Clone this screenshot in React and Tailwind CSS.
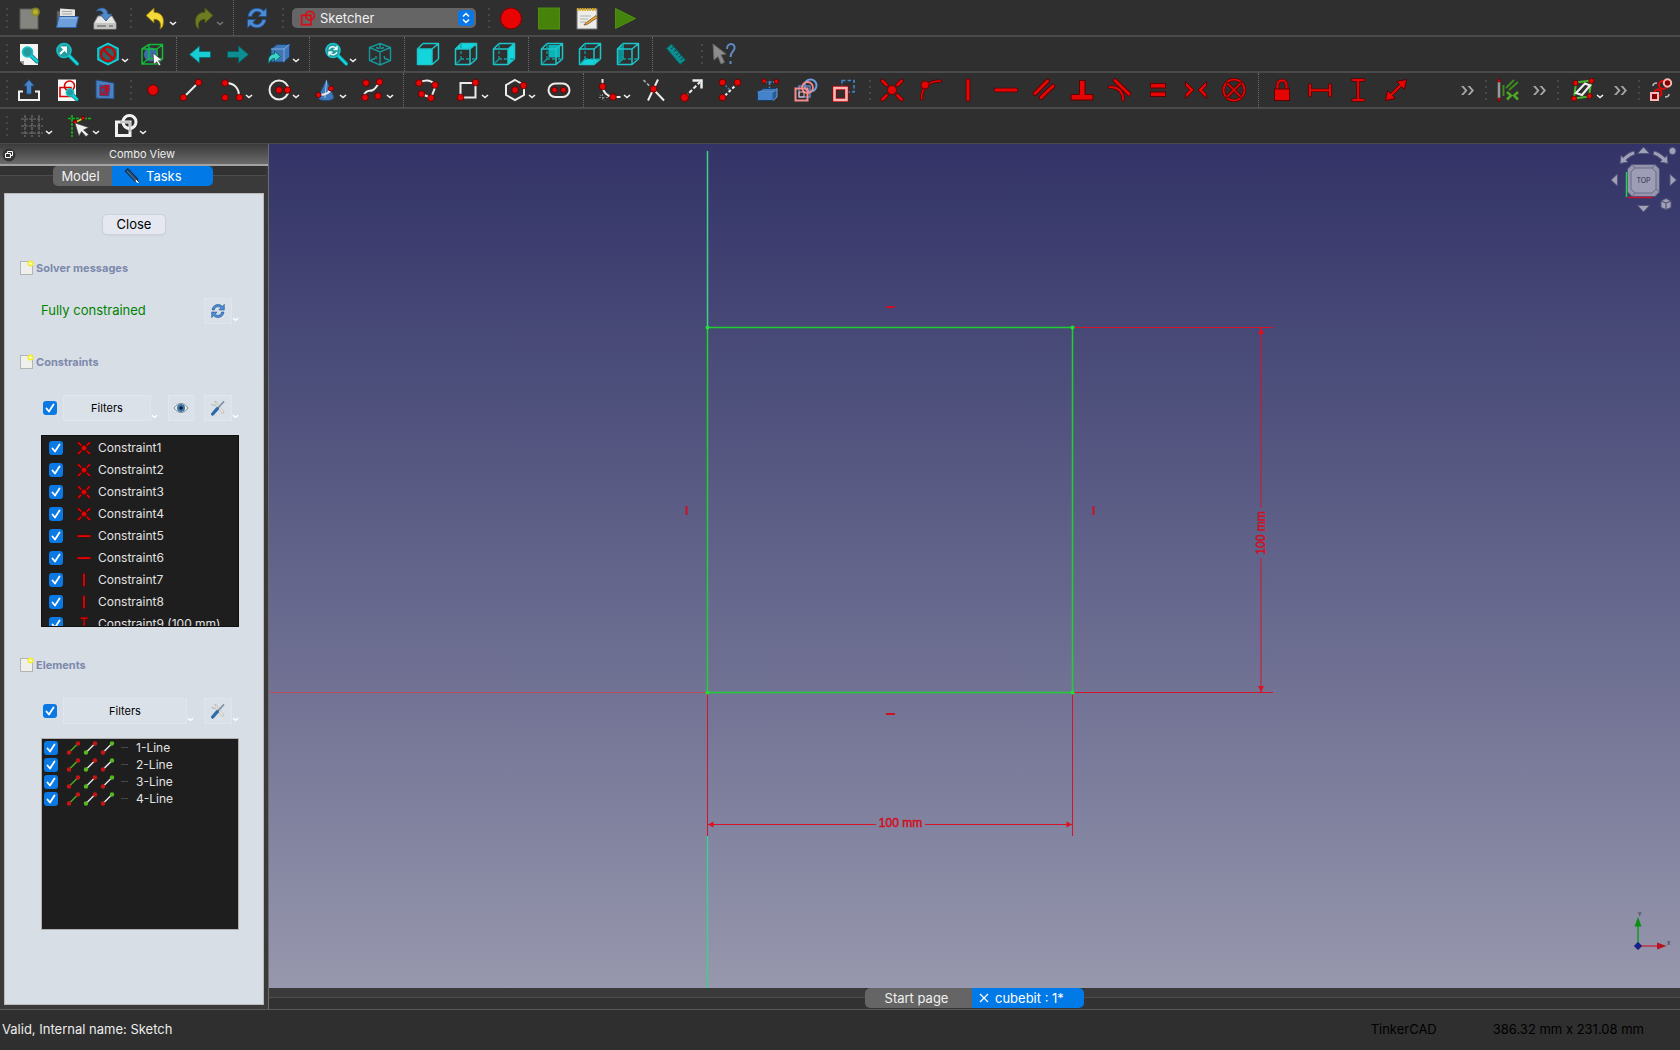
import { useState } from 'react';
import clsx from 'clsx';

const RED = '#e60505';
const DARK_RED = '#5c0000';
const CYAN = '#12d6dc';
const TEAL = '#16979b';
const WHITE = '#ececea';

const Svg = ({ size = 24, children }) => (
    <svg width={size} height={size} viewBox="0 0 24 24" fill="none" aria-hidden="true" className="shrink-0">
        {children}
    </svg>
);

const Dot = ({ x, y, r = 3.3 }) => <circle cx={x} cy={y} r={r} fill={RED} stroke={DARK_RED} strokeWidth="0.8" />;

const W = ({ d, dash }) => <path d={d} stroke={WHITE} strokeWidth="2" strokeDasharray={dash} />;

/* thick red stroke with a dark outline, used by all constraint icons */
const R = ({ d, w = 3 }) => (
    <>
        <path d={d} stroke={DARK_RED} strokeWidth={w + 1.6} strokeLinecap="round" />
        <path d={d} stroke={RED} strokeWidth={w} strokeLinecap="round" />
    </>
);

const faces = {
    front: '1,7 16,7 16,22.500 1,22.500',
    top: '1,7 7,1.500 22.500,1.500 16,7',
    right: '16,7 22.500,1.500 22.500,17 16,22.500',
    rear: '8.500,3 20,3 20,15.500 8.500,15.500',
    bottom: '1,22.500 7,17 22.500,17 16,22.500',
    left: '1,7 7.500,2 7.500,16.500 1,22.500',
};

const Cube = ({ face }) => (
    <>
        <polygon points={faces[face]} fill={face === 'rear' ? '#0cb2b6' : CYAN} />
        {face === 'left' && <polygon points={faces.left} fill="#0a8e92" />}
        <path d="M1.500 7H16v15.500H1.500zM7 1.500h15.500V17M1.500 7L7 1.500M16 7l6.500-5.500M16 22.500l6.500-5.500" stroke="#1cc5ca" strokeWidth="1.500" strokeLinejoin="round" />
        {face !== 'front' && <path d="M7 2v4M7 9v3M7 17l-5 5M7 17h3M12 17h3M18 17h4M7 14v3" stroke="#129a9e" strokeWidth="1.300" />}
    </>
);

const Magnifier = ({ x = 9, y = 8.5, r = 7 }) => (
    <>
        <path d={`M${x + r * 0.7} ${y + r * 0.7}L${x + r * 1.9} ${y + r * 1.9}`} stroke="#0d7f83" strokeWidth="4" strokeLinecap="round" />
        <path d={`M${x + r * 0.7} ${y + r * 0.7}L${x + r * 1.9} ${y + r * 1.9}`} stroke={CYAN} strokeWidth="2.400" strokeLinecap="round" />
        <circle cx={x} cy={y} r={r} fill="#239a9e" stroke="#14c2c8" strokeWidth="1.600" />
    </>
);

const Refresh = () => (
    <>
        <path d="M3 10.500C3.500 5 8 2.200 12 2.200c2.800 0 5 1 6.600 2.800L21.500 2v8.500h-8.300l2.900-3c-1-1.200-2.500-1.900-4.200-1.900-2.500 0-4.400 1.600-5.200 4.900z" fill="#4c8bd6" stroke="#1f4f8a" strokeWidth="0.800" />
        <path d="M21 13.500c-.5 5.500-5 8.300-9 8.300-2.800 0-5-1-6.600-2.800L2.500 22v-8.500h8.300l-2.900 3c1 1.200 2.500 1.900 4.200 1.900 2.500 0 4.400-1.600 5.200-4.900z" fill="#4c8bd6" stroke="#1f4f8a" strokeWidth="0.800" />
    </>
);

const icons = {
    newDoc: (
        <>
            <rect x="3" y="3" width="18" height="20" fill="#85857f" stroke="#5d5d5a" />
            <circle cx="18.500" cy="6" r="4.500" fill="#8d8a25" opacity="0.800" />
            <circle cx="18.500" cy="6" r="2.500" fill="#b7b229" />
        </>
    ),
    open: (
        <>
            <path d="M2 5h7l1 2h9v13H2z" fill="#6b6b69" stroke="#444" />
            <path d="M5 2.500l15 1v13H5z" fill="#e4e4e2" />
            <path d="M7 5.500h10M7 8h10" stroke="#aaa" />
            <path d="M4 10.500h19.500L21 21.500H1.500z" fill="#6f9fda" stroke="#2f62a5" />
            <path d="M5 12h16.500" stroke="#a5c5ec" />
        </>
    ),
    save: (
        <>
            <path d="M5 10h14l4 7v6H1v-6z" fill="#e6e6e4" stroke="#8a8a88" />
            <path d="M1.500 17h21v5.500h-21z" fill="#c4c4c2" />
            <path d="M4 20h9M16 20h4" stroke="#777" strokeWidth="1.300" />
            <path d="M3 5C6 1 14 0 15 8h4l-6 7-6-7h3c0-3-3-4-7-3z" fill="#5087c6" stroke="#22507f" strokeWidth="0.800" />
        </>
    ),
    undo: <path d="M2 9.500L10 2v4.300c7 0 11 5 9 13-.5 2-1.500 3-3 3.700 1.500-6-.5-9.700-6-9.700V17z" fill="#f3d93a" stroke="#8d7500" strokeWidth="0.900" />,
    redo: <path d="M22 9.500L14 2v4.300c-7 0-11 5-9 13 .5 2 1.500 3 3 3.700-1.500-6 .5-9.700 6-9.700V17z" fill="#6f7b23" stroke="#4b5512" strokeWidth="0.900" />,
    refresh: <Refresh />,
    record: <circle cx="12" cy="12.500" r="10.500" fill="#e90404" stroke="#7d0000" />,
    stop: <rect x="1.500" y="2" width="21" height="21" fill="#47820a" stroke="#4d9010" />,
    macros: (
        <>
            <rect x="2" y="3" width="20" height="20" fill="#ecece8" stroke="#777" />
            <path d="M2 3.500h20" stroke="#d8a914" strokeWidth="3" strokeDasharray="1.500 1" />
            <path d="M5 10h11M5 13h8M5 16h6" stroke="#b2b2b0" />
            <path d="M10 17.500L21 9.500l1.500 2L12 18.500l-3 .5z" fill="#eca13c" stroke="#6b4a15" strokeWidth="0.700" />
        </>
    ),
    play: <path d="M2.500 2.500L22.500 12.500 2.500 22.500z" fill="#44830c" stroke="#4d9010" />,

    fitAll: (
        <>
            <path d="M3 2h18v21H7l-4-4z" fill="#f4f4f2" />
            <path d="M3 19h4v4z" fill="#999" />
            <Magnifier x={10.5} y={10} r={5} />
        </>
    ),
    fitSelection: (
        <>
            <Magnifier />
            <path d="M5 12l5-5M7.500 5.500H11V9z" stroke="#fff" strokeWidth="2" fill="#fff" />
        </>
    ),
    drawStyle: (
        <>
            <path d="M12 1.500l10 5v11l-10 5-10-5v-11z" fill="#0f7f83" stroke={CYAN} strokeWidth="1.600" />
            <circle cx="12" cy="12" r="7" fill="#2e6265" stroke="#c90000" strokeWidth="2.200" />
            <path d="M7 7l10 10" stroke="#c90000" strokeWidth="2.200" />
        </>
    ),
    boundingBox: (
        <>
            <circle cx="11" cy="12.500" r="7" fill="#3b6ea8" />
            <path d="M2 7l7-4.500h13.500V17L17 22H2zM2 7h15v15M17 7l5.500-4.500M9 3v13.500h13M9 16.500L2 22" stroke="#12b93a" strokeWidth="1.500" />
            <path d="M13 11l9.500 7.500-4 .3 2.300 4-2 1-2-4-3 2.700z" fill="#fff" stroke="#333" strokeWidth="0.700" />
        </>
    ),
    back: <path d="M1.500 12.500L11.500 4v5.500h11v6h-11V21z" fill="#18cdd3" stroke="#0b6f72" />,
    forward: <path d="M22.500 12.500L12.500 4v5.500h-11v6h11V21z" fill="#0d8e92" stroke="#0a5c5f" />,
    linkGo: (
        <>
            <path d="M4 7l6-4.500h12.500V15L17 20H4z" fill="#3f76b8" stroke="#1d4373" />
            <path d="M4 7h13v13M17 7l5.500-4.500" stroke="#7eaade" />
            <path d="M1.500 22c-1-8 3-10 6-10V9l6 5.500L7.500 20v-3.500c-2 0-4 1-6 5.500z" fill="#3ad4c9" stroke="#0b5553" strokeWidth="0.800" />
        </>
    ),
    syncView: (
        <>
            <Magnifier />
            <path d="M5 7.500c1-3 5-4 7-1M13 4v3.500H9.500M13 10c-1 3-5 4-7 1M5 13.500V10h3.500" stroke="#e9fdfd" strokeWidth="1.500" />
        </>
    ),
    isometric: (
        <path d="M12 1.500l10.500 4v13L12 23 1.500 18.500v-13zM1.500 5.500L12 10l10.500-4.500M12 10v13M12 2v5M3 18l4-1.500M21 18l-4-1.500M8 14v3M16 14l1 3M8 5.500l3 1M16 5.500l-3 1" stroke={TEAL} strokeWidth="1.400" />
    ),
    front: <Cube face="front" />,
    top: <Cube face="top" />,
    right: <Cube face="right" />,
    rear: <Cube face="rear" />,
    bottom: <Cube face="bottom" />,
    left: <Cube face="left" />,
    measure: (
        <>
            <path d="M7.500 2L21.500 18l-5.500 4.500L2.500 6.500z" fill="#0e8d91" stroke="#09565a" />
            <path d="M9.500 5L7 7M12 8l-2 1.500M14.500 11L12 13M17 13.500l-2 1.500M19 16l-2.500 2" stroke="#063f42" />
        </>
    ),
    whatsThis: (
        <>
            <path d="M1 2l13 10-5 .8 3.500 7.500-3.500 1.700-3-7.500-4 3.500z" fill="#8d8d8d" stroke="#666" />
            <path d="M15 7c0-7 8.500-6.500 7.500-.5-.5 3-4 3.500-4 8.500M18.500 19v3" stroke="#5f8ac4" strokeWidth="2" />
        </>
    ),

    leaveSketch: (
        <>
            <path d="M6 13.500H2V22h20v-8.500h-4" stroke="#f0f0f0" strokeWidth="2" />
            <path d="M12 1.500l5.500 6.500H14.500v8h-5V8H6.500z" fill="#4b82c4" stroke="#1d4677" />
        </>
    ),
    viewSketch: (
        <>
            <path d="M3 1.500h18V23H3z" fill="#f7f7f5" />
            <path d="M5 9.500h11v9H5z" stroke="#d90000" strokeWidth="1.600" />
            <circle cx="14.500" cy="8" r="5" stroke="#d90000" strokeWidth="1.600" />
            <Magnifier x={15} y={14.5} r={3.6} />
        </>
    ),
    viewSection: (
        <>
            <path d="M3 2l5 2v17l-5-1z" fill="#6f9dd6" />
            <path d="M3 2l18 3v16L3 20z" fill="#4a80c4" stroke="#23497c" />
            <path d="M6.500 6.500l10 1.500v10.500L6.500 18z" fill="#2f5486" />
            <path d="M7.500 9.500h7v7h-7zM10.500 7.500h5.500v6M9 17l6-9M10 10c3-1 5 2 3 5" stroke="#b3122a" strokeWidth="1.300" />
        </>
    ),
    point: <Dot x={12} y={12} r={5.3} />,
    line: (<><W d="M5 19L19 5" /><Dot x={4.5} y={19.5} /><Dot x={19.5} y={4.5} /></>),
    arc: (<><W d="M6 5c9 0 13 6 13 13" /><Dot x={5} y={5} /><Dot x={5} y={19.5} /><Dot x={19.5} y={19.5} /></>),
    circle: (<><circle cx="12" cy="12" r="9.500" stroke={WHITE} strokeWidth="2" /><Dot x={12} y={12} /><Dot x={20.5} y={12} /></>),
    conic: (
        <>
            <path d="M12.500 1.500L20 19c0 5-16 5-16 0z" fill="#3f78b9" stroke="#1f466f" />
            <path d="M12.500 2.500L11 20" stroke="#9dc2ea" />
            <W d="M5 17c6 0 11-2 12-7" />
            <Dot x={4.5} y={17} r={2.6} /><Dot x={17} y={10.5} r={2.6} />
        </>
    ),
    spline: (<><W d="M3 17c3-6 5-3 9-5s4-7 8-7" /><Dot x={5} y={5} /><Dot x={18.5} y={4} /><Dot x={4} y={19.5} /><Dot x={17} y={18} /></>),
    polyline: (<><W d="M4 5c6-4 12-3 17 2l-5 13-9-4" /><Dot x={4} y={5} /><Dot x={20} y={7} /><Dot x={6.5} y={16} /><Dot x={16} y={20} /></>),
    rectangle: (<><rect x="4.500" y="5" width="15" height="14.500" stroke={WHITE} strokeWidth="2" /><Dot x={19.5} y={4.5} /><Dot x={4.5} y={19.5} /></>),
    polygon: (<><path d="M12 2l9 5v10l-9 5-9-5V7z" stroke={WHITE} strokeWidth="2" /><Dot x={12} y={12} /><Dot x={20.5} y={7.5} /></>),
    slot: (<><rect x="1.500" y="5.500" width="21" height="13.500" rx="6.700" stroke={WHITE} strokeWidth="2" /><Dot x={7.5} y={12} r={2.7} /><Dot x={16.5} y={12} r={2.7} /></>),
    fillet: (
        <>
            <W d="M4.500 1v8c1 6 5 9 10 10h8" />
            <path d="M4.500 16v7M1 19.500h9M2 16.500l5 6" stroke="#8b8b8b" strokeDasharray="2 1.500" />
            <Dot x={4.5} y={8.5} /><Dot x={15} y={19} />
        </>
    ),
    trim: (<><path d="M1.500 2l9 9" stroke="#b0b0b0" strokeWidth="1.600" strokeDasharray="3 2" /><W d="M12 12l10 10.500M16 1.500L6 22.500" /><Dot x={11.5} y={11} /></>),
    extend: (<><W d="M5 19L20 4" dash="4 2" /><path d="M12.500 2.500h9v8" stroke={WHITE} strokeWidth="2.500" /><Dot x={4.5} y={19.5} r={4} /></>),
    split: (
        <>
            <path d="M5 5l7 7" stroke="#3f7bb7" strokeWidth="1.500" strokeDasharray="2 1.500" />
            <W d="M20 5L5 19.500" dash="3 2" />
            <Dot x={4.5} y={4.5} /><Dot x={19.5} y={4.5} /><Dot x={4.5} y={19.5} />
        </>
    ),
    external: (
        <>
            <path d="M1.500 14l6-3.500H21L17 14v8.500H1.500z" fill="#3e79bd" stroke="#183c68" />
            <path d="M1.500 14H17l4-3.500V19L17 22.500" fill="#2c5c96" stroke="#6ba1da" />
            <path d="M2 14.500h14.500V22H2z" fill="#4482ca" />
            <path d="M8 4h11M13.500 4v6" stroke="#4c8bd0" strokeWidth="1.500" strokeDasharray="3 1.500" />
            <Dot x={8} y={3} r={2.2} /><Dot x={20.5} y={3.5} r={2.2} />
        </>
    ),
    carbonCopy: (
        <>
            <circle cx="16.500" cy="7.500" r="6" stroke="#6ca0e6" strokeWidth="2" />
            <path d="M5 8h11v11H5z" stroke="#5a86c4" strokeWidth="1.500" />
            <circle cx="13.500" cy="9.500" r="5.500" stroke="#f78a8a" strokeWidth="1.800" />
            <path d="M1.500 10.500h12v12h-12z" stroke="#f78a8a" strokeWidth="2" />
            <path d="M5 14h5v5H5z" stroke="#fbbcbc" />
        </>
    ),
    toggleConstruction: (
        <>
            <path d="M10 2.500h12V14H10z" stroke="#3f86c9" strokeWidth="1.600" strokeDasharray="3.500 2" />
            <rect x="2.500" y="10" width="12" height="12" fill="#2e2e2e" stroke="#a80000" strokeWidth="4.400" />
            <rect x="2.500" y="10" width="12" height="12" stroke="#f9b6b6" strokeWidth="2.600" />
        </>
    ),
    coincident: (<><R d="M2.500 3l4 4M21.500 3l-4 4M2.500 21.500l4-4M21.500 21.500l-4-4" w={2.6} /><Dot x={12} y={12} r={4.5} /></>),
    pointOnObject: (<><R d="M22.500 3C12 3 3.500 8 3.500 21" w={1.6} /><Dot x={7} y={7} r={4} /></>),
    vertical: <R d="M12 2.500v19" />,
    horizontal: <R d="M2 12h20" />,
    parallel: <R d="M3 15.500L15.500 3M9 19.500L21 8" />,
    perpendicular: (<><path d="M9.500 2.500h5.500v14h8v5.500h-22v-5.500h8.500z" fill={RED} stroke={DARK_RED} /></>),
    tangent: (<><R d="M7 2.500L21 16" /><R d="M1.500 9C10 9 15 13 15 22" w={1.8} /></>),
    equal: (<><rect x="4.500" y="5.500" width="15" height="4.500" fill={RED} stroke={DARK_RED} /><rect x="4.500" y="14" width="15" height="4.500" fill={RED} stroke={DARK_RED} /></>),
    symmetric: (<><path d="M1.500 3.500l8.500 8.500-8.500 8.500v-4.500L5.500 12l-4-4zM22.500 3.500L14 12l8.500 8.500v-4.500L18.500 12l4-4z" fill={RED} stroke={DARK_RED} /></>),
    block: (
        <>
            <circle cx="12" cy="12" r="10.500" stroke={DARK_RED} strokeWidth="3.200" />
            <circle cx="12" cy="12" r="10.500" stroke={RED} strokeWidth="1.700" />
            <R d="M5.500 5.500l13 13M18.500 5.500l-13 13" w={1.6} />
        </>
    ),
    lock: (
        <>
            <path d="M7.500 12V7c0-6 9-6 9 0v5" stroke={DARK_RED} strokeWidth="3.500" />
            <path d="M7.500 12V7c0-6 9-6 9 0v5" stroke={RED} strokeWidth="2" />
            <rect x="4.500" y="11" width="15" height="11.500" fill={RED} stroke={DARK_RED} />
        </>
    ),
    distanceX: <R d="M2 7v10.500M22 7v10.500M2.500 12.200h19" w={2} />,
    distanceY: <R d="M7 2h10.500M7 22h10.500M12.200 2.500v19" w={2} />,
    distance: <path d="M22.500 1.500l-2 10-3-3L8.500 17.500l3 3-10 2 2-10 3 3 9-9-3-3z" fill={RED} stroke={DARK_RED} />,
    driving: (
        <>
            <path d="M3 3v18" stroke="#9a9a9a" strokeWidth="2.500" />
            <Dot x={3} y={2.5} r={1.5} /><Dot x={3} y={21.5} r={1.5} />
            <path d="M7.500 7v11M10 10l8-8M13 12l9-8" stroke="#3f8f1e" strokeWidth="1.800" />
            <path d="M11 14l4 3.500-4 4M22 14l-4 3.500 4 4" stroke="#4fa526" strokeWidth="2.500" />
        </>
    ),
    bspline: (
        <>
            <path d="M5 4.500L20 2.500M20 4l-2 14M5 5L3 20M3 20.500L18 18.500" stroke="#43b52a" strokeWidth="2" />
            <path d="M5 15L14 5.500l5 2-8 9.500z" stroke={WHITE} strokeWidth="2.200" />
            <Dot x={4.5} y={5} r={2.6} /><Dot x={20.5} y={2.8} r={2.6} /><Dot x={3} y={20.5} r={2.6} /><Dot x={18.5} y={18} r={2.6} />
        </>
    ),
    virtualSpace: (
        <>
            <path d="M4 8c0-2 1-3 4-3M20 16c0 2-1 3-4 3" stroke="#bbb" strokeWidth="1.500" />
            <circle cx="14" cy="7" r="4" stroke={RED} strokeWidth="2" />
            <circle cx="18.500" cy="5" r="3.700" fill="#7e0000" stroke="#ffb5b5" strokeWidth="2" />
            <circle cx="9" cy="15" r="3.500" stroke={RED} strokeWidth="2" />
            <rect x="2" y="15" width="7" height="7" fill="#7e0000" stroke="#ffb5b5" strokeWidth="2" />
        </>
    ),

    grid: <path d="M5 1v22M12 1v22M19 1v22M1 5h22M1 12h22M1 19h22" stroke="#727272" strokeWidth="1.200" strokeDasharray="3 1" />,
    snap: (
        <>
            <path d="M5 1v22M1 4.500h23" stroke="#12b422" strokeWidth="1.600" strokeDasharray="3 1" />
            <path d="M8 8.500L17 4" stroke="#d8d02a" strokeWidth="1.500" />
            <Dot x={16} y={4} r={1.8} />
            <Dot x={8} y={8} r={1.8} />
            <path d="M8 9l13.500 4.500-5 2.500 5 4.500-2.500 2-4.500-5-2.500 4.500z" fill="#f0f0ee" stroke="#444" strokeWidth="0.600" />
        </>
    ),
    renderOrder: (
        <>
            <rect x="2.500" y="8" width="13.500" height="13.500" stroke="#f2f2f2" strokeWidth="3" />
            <circle cx="15.500" cy="8" r="6.500" stroke="#f2f2f2" strokeWidth="3" />
            <path d="M6 8h10v10" stroke="#8b8b8b" strokeWidth="0.800" />
        </>
    ),
};

const Chevron = ({ className }) => (
    <svg width="8" height="5" viewBox="0 0 8 5" fill="none" aria-hidden="true" className={className}>
        <path d="M1 1l3 2.500L7 1" stroke="currentColor" strokeWidth="1.600" />
    </svg>
);

const Grip = () => (
    <div className="flex w-2.5 shrink-0 flex-col items-end justify-center gap-1 pr-0.5">
        {[0, 1, 2, 3].map((i) => <span key={i} className="size-0.5 bg-[#484848]" />)}
    </div>
);

const Separator = () => (
    <div className="flex w-2.5 shrink-0 justify-center">
        <span className="border-l border-dotted border-[#6a6a6a]" />
    </div>
);

const More = () => (
    <button aria-label="More tools" className="flex w-6 shrink-0 items-center justify-center text-[#a5a5a5]">
        <svg width="15" height="11" viewBox="0 0 15 11" fill="none" aria-hidden="true">
            <path d="M1 1h2.500l4 4.500-4 4.500H1l4-4.500zM7.500 1H10l4 4.500-4 4.500H7.500l4-4.500z" fill="currentColor" />
        </svg>
    </button>
);

const Tool = ({ name, menu, dim }) => (
    <button aria-label={name} className={clsx('flex shrink-0 items-center', menu ? 'w-[47px] pl-2.5' : 'w-[38px] justify-center')}>
        <Svg>{icons[name]}</Svg>
        {menu && <Chevron className={clsx('mt-3 ml-px', dim ? 'text-[#777]' : 'text-[#f2f2f2]')} />}
    </button>
);

const Tools = ({ items }) => items.split(' ').map((item, i) => {
    if (item === '|') return <Grip key={i} />;
    if (item === '.') return <Separator key={i} />;
    if (item === '>') return <More key={i} />;
    return <Tool key={i} name={item.replace(/[+-]$/, '')} menu={/[+-]$/.test(item)} dim={item.endsWith('-')} />;
});

const ToolRow = ({ children, className = 'h-9 border-b-2' }) => (
    <div className={clsx('flex shrink-0 overflow-hidden border-[#4b4b4b] bg-[#2f2f2f]', className)}>{children}</div>
);

const WorkbenchSelect = () => (
    <div className="relative mx-1.5 flex w-[184px] shrink-0 items-center self-center">
        <select aria-label="Workbench" className="h-5 w-full appearance-none rounded-[5px] bg-[#656565] pl-7 text-[13px] leading-5 text-[#f1f1f1]">
            <option>Sketcher</option>
            <option>Part Design</option>
        </select>
        <span className="pointer-events-none absolute left-2 top-0.5">
            <svg width="16" height="16" viewBox="0 0 24 24" fill="none" aria-hidden="true">
                <rect x="2.500" y="8" width="14" height="14" stroke="#d90d17" strokeWidth="2.600" />
                <circle cx="15" cy="8.500" r="6.500" stroke="#d90d17" strokeWidth="2.600" />
            </svg>
        </span>
        <span className="pointer-events-none absolute right-0.5 top-0.5 flex size-4 items-center justify-center rounded bg-[#0a78e8]">
            <svg width="8" height="12" viewBox="0 0 8 12" fill="none" aria-hidden="true">
                <path d="M1 4.500l3-3 3 3M1 7.500l3 3 3-3" stroke="#fff" strokeWidth="1.500" />
            </svg>
        </span>
    </div>
);

const Check = ({ label, className }) => {
    const [on, setOn] = useState(true);
    return (
        <span className={clsx('grid size-3.5 shrink-0', className)}>
            <input type="checkbox" aria-label={label} checked={on} onChange={() => setOn(!on)} className="col-start-1 row-start-1 size-3.5 appearance-none rounded-[3px] bg-[#4a4a4a] checked:bg-[#0a79e4]" />
            {on && (
                <svg width="14" height="14" viewBox="0 0 14 14" fill="none" aria-hidden="true" className="pointer-events-none col-start-1 row-start-1">
                    <path d="M3.500 7.500l2.500 3 4.500-7" stroke="#fff" strokeWidth="1.800" strokeLinecap="round" strokeLinejoin="round" />
                </svg>
            )}
        </span>
    );
};

const SectionTitle = ({ children, className }) => (
    <h2 className={clsx('flex h-4 items-center gap-0.5 pl-[15px] text-[11px] font-bold text-[#7d89ac]', className)}>
        <svg width="14" height="16" viewBox="0 0 14 16" aria-hidden="true">
            <rect x="0.500" y="1.500" width="12" height="13" fill="#efefec" stroke="#b3b5b4" />
            <circle cx="10.500" cy="3.500" r="3" fill="#f3ee2a" />
            <circle cx="10.500" cy="3.500" r="1.200" fill="#fffde0" />
        </svg>
        {children}
    </h2>
);

const flat = 'flex h-[26px] items-center justify-center border border-[#e1e6ed] bg-[#dbe1e9] text-[11px] text-black';

const MenuMark = () => <Chevron className="mb-0.5 w-[7px] shrink-0 self-end text-white" />;

const SettingsButton = () => (
    <>
        <button aria-label="Settings" className={clsx(flat, 'ml-2.5 w-7 shrink-0')}>
            <Svg size={16}>
                <path d="M2 6c2 3 5 3 7 2l9 12 3-1-1-3-9-9c1-3-1-5-4-5l2 3-3 3z" fill="#e9e7e2" stroke="#b2b0aa" />
                <path d="M21 2L11 13" stroke="#7f93a8" strokeWidth="2.500" />
                <path d="M11 13L4 21" stroke="#2f6aa8" strokeWidth="5" strokeLinecap="round" />
            </Svg>
        </button>
        <MenuMark />
    </>
);

const FilterRow = ({ label, children }) => (
    <div className="mt-[25px] flex items-center pl-9 pr-6">
        <Check label={label} className="ml-0.5" />
        <button className={clsx(flat, 'ml-1.5 flex-1')}>Filters</button>
        <MenuMark />
        {children}
        <SettingsButton />
    </div>
);

const constraints = [
    ['Constraint1', 'coincident'],
    ['Constraint2', 'coincident'],
    ['Constraint3', 'coincident'],
    ['Constraint4', 'coincident'],
    ['Constraint5', 'horizontal'],
    ['Constraint6', 'horizontal'],
    ['Constraint7', 'vertical'],
    ['Constraint8', 'vertical'],
    ['Constraint9 (100 mm)', 'distanceY'],
];

const LineMark = ({ start, end, line }) => (
    <svg width="15" height="14" viewBox="0 0 15 14" aria-hidden="true">
        <path d="M3 11.500L12 2.500" stroke={line} strokeWidth="1.500" />
        <circle cx="3" cy="11.500" r="2.200" fill={start} />
        <circle cx="12" cy="2.500" r="2.200" fill={end} />
    </svg>
);

const ComboView = () => (
    <aside className="flex w-[269px] shrink-0 flex-col border-r border-[#6d6d6d] bg-[#3a3a3a]">
        <header className="relative flex h-[22px] shrink-0 items-center justify-center border-b-2 border-[#a3a3a3] bg-linear-to-b from-[#3b3b3b] to-[#6b6b6b] pl-4 text-[11px] text-[#ececec]">
            <button aria-label="Float" className="absolute left-0.5 top-1">
                <svg width="14" height="14" viewBox="0 0 14 14" fill="none" aria-hidden="true">
                    <circle cx="7" cy="7" r="6.500" fill="#333" />
                    <path d="M5.500 5.500v-2h5v4h-2" stroke="#fff" />
                    <path d="M3.500 5.500h5v4h-5z" stroke="#fff" />
                </svg>
            </button>
            Combo View
        </header>
        <div className="grid h-[27px] shrink-0 grid-cols-[1fr_auto_1fr] pr-0.5">
            <span className="h-2.5 border-b border-[#4d4d4d] bg-[#323232]" />
            <div className="flex h-5 overflow-hidden rounded-[5px] text-[13px] leading-5 text-[#f1f1f1]">
                <button className="w-[59px] bg-[#656565] pr-1">Model</button>
                <button className="flex w-[101px] items-center gap-1.5 bg-[#0179e6] pl-3 text-white">
                    <svg width="16" height="16" viewBox="0 0 16 16" aria-hidden="true">
                        <path d="M1 3l3-2.500 9 9.500 1.500 4.500-4-1.500z" fill="#24486b" stroke="#16283b" />
                        <path d="M3 3l8.500 9" stroke="#4b82b8" />
                        <path d="M12 12l2.500 2.500-2-.5z" fill="#fff" stroke="#fff" />
                    </svg>
                    Tasks
                </button>
            </div>
            <span className="h-2.5 border-b border-[#4d4d4d] bg-[#323232]" />
        </div>
        <div className="mx-1 mb-1 flex-1 overflow-hidden border border-[#b9b9b9] bg-[#d7dee6]">
            <button className="mx-auto mt-5 block h-[21px] w-16 rounded-[5px] border border-[#cdd1da] bg-[#e5e8f1] text-[13px] leading-[19px] text-black shadow-xs">Close</button>

            <SectionTitle className="mt-[25px]">Solver messages</SectionTitle>
            <div className="mt-[22px] flex items-center pl-9 pr-6">
                <span className="flex-1 text-[13px] text-[#008200]">Fully constrained</span>
                <button aria-label="Update" className={clsx(flat, 'w-7')}><Svg size={16}><Refresh /></Svg></button>
                <MenuMark />
            </div>

            <SectionTitle className="mt-[30px]">Constraints</SectionTitle>
            <FilterRow label="All constraints">
                <button aria-label="Show or hide" className={clsx(flat, 'ml-2.5 w-[26px] shrink-0')}>
                    <svg width="16" height="12" viewBox="0 0 16 12" aria-hidden="true">
                        <path d="M1 6c4-6 10-6 14 0-4 6-10 6-14 0z" fill="#e9edf2" stroke="#8b8d90" />
                        <circle cx="8" cy="6" r="4" fill="#3f78ad" />
                        <circle cx="8" cy="6" r="1.800" fill="#0b1d30" />
                    </svg>
                </button>
            </FilterRow>
            <ul className="ml-9 mr-6 mt-3.5 h-48 overflow-hidden border border-[#111] bg-[#1e1e1e] pt-px text-[12px] text-[#e2e2e2]">
                {constraints.map(([name, icon]) => (
                    <li key={name} className="flex h-[22px] items-center pl-[7px]">
                        <Check label={name} />
                        <span className="ml-3.5"><Svg size={14}>{icons[icon]}</Svg></span>
                        <span className="ml-[7px] whitespace-nowrap">{name}</span>
                    </li>
                ))}
            </ul>

            <SectionTitle className="mt-[30px]">Elements</SectionTitle>
            <FilterRow label="All elements" />
            <ul className="ml-9 mr-6 mt-3.5 h-48 border border-[#b0b0b0] bg-[#1e1e1e] pl-px text-[12px] text-[#e2e2e2]">
                {[1, 2, 3, 4].map((n) => (
                    <li key={n} className="flex h-[17px] items-center pl-px">
                        <Check label={`${n}-Line`} />
                        <span className="ml-2 flex gap-0.5">
                            <LineMark start="#c81414" end="#c81414" line="#4fae22" />
                            <LineMark start="#56b81e" end="#c81414" line="#e6e6e6" />
                            <LineMark start="#c81414" end="#56b81e" line="#e6e6e6" />
                        </span>
                        <span className="ml-1.5 h-px w-[7px] bg-[#484848]" />
                        <span className="ml-2">{n}-Line</span>
                    </li>
                ))}
            </ul>
        </div>
    </aside>
);

const NavCube = () => (
    <svg width="76" height="70" viewBox="0 0 76 70" fill="#a0a0b6" stroke="#55557c" aria-hidden="true" className="absolute right-0 top-0">
        <path d="M39.500 3l6 6.500h-12zM39.500 68l6-6.500h-12zM7 36l6.500-6v12zM72.500 36l-6.500-6v12z" />
        <path d="M16 19.500l1-8 2 2C23 10 26 8 30 7l1 3.500c-4 1-6 3-9 5.500l2 2zM64 19.500l-1-8-2 2C57 10 54 8 50 7l-1 3.500c4 1 6 3 9 5.500l-2 2z" />
        <circle cx="68.500" cy="7" r="3.500" />
        <path d="M57 57l5-2.500 5 2.500v6.500l-5 2-5-2z" />
        <path d="M57 57l5 2 5-2M62 59v6" fill="none" stroke="#4a4a70" />
        <path d="M28 20.500h23l4.500 4.500v23l-4.500 4.500H28L23.500 48V25z" fill="#9596ad" />
        <path d="M31 24h17l4 4v17l-4 4H31l-4-4V28z" fill="#9d9eb5" stroke="#6a6a8c" />
        <path d="M28 20.500l3 3.500M51 20.500L48 24M55.500 48L52 45M28 52.500l3-3.500" stroke="#6a6a8c" />
        <path d="M22.500 28v25" stroke="#1fd34a" strokeWidth="1.500" />
        <path d="M23.500 53.500h25" stroke="#c4142f" strokeWidth="1.500" />
        <text x="39.500" y="38.500" textAnchor="middle" fontSize="7" fill="#30304a" stroke="none">TOP</text>
    </svg>
);

const AxisCross = () => (
    <svg width="60" height="50" viewBox="0 0 60 50" aria-hidden="true" className="absolute bottom-7 right-2">
        <path d="M26 36V14" stroke="#159a2a" strokeWidth="1.500" />
        <path d="M22.500 16.500L26 7l3.500 9.500z" fill="#0a8f14" />
        <path d="M26 36h22" stroke="#c23045" strokeWidth="1.500" />
        <path d="M45 32.500l9.500 3.500-9.500 3.500z" fill="#b71220" />
        <path d="M26 32.500l3.500 3.500-3.500 3.500-3.500-3.500z" fill="#15219a" stroke="#0c1260" />
        <text x="26" y="6" fontSize="5" fill="#222">Y</text>
        <text x="55" y="35" fontSize="5" fill="#222">X</text>
    </svg>
);

const Sketch = () => (
    <svg width="1412" height="844" viewBox="1 0 1412 844" fill="none" aria-label="Sketch" className="absolute left-0 top-0">
        <path d="M439.500 7v176M439.500 692v152" stroke="#3fd08a" strokeWidth="1.500" />
        <path d="M0 548.500h439" stroke="#bd4a63" />
        <g stroke="#d5142a">
            <path d="M805 183.500h200M805 548.500h200M993 184v180M993 414v134" />
            <path d="M439.500 549v143M804.500 549v143M440 680.500h168M657 680.500h147" />
        </g>
        <path d="M993 184l-3 6h6zM993 548l-3-6h6zM440 680.500l5.500-3v6zM804 680.500l-5.500-3v6z" fill="#e0101c" />
        <path d="M439.500 183.500h365v365h-365z" stroke="#20d032" strokeWidth="1.500" />
        <g fill="#20e030">
            <circle cx="439.500" cy="183.500" r="2" />
            <circle cx="804.500" cy="183.500" r="2" />
            <circle cx="439.500" cy="548.500" r="2" />
            <circle cx="804.500" cy="548.500" r="2" />
        </g>
        <path d="M618 163h9M618 570h9M418.500 362v9M825.500 362v9" stroke="#cc1026" strokeWidth="2" />
        <g fill="#cf0f1f" stroke="#cf0f1f" strokeWidth="0.500" fontSize="12" textAnchor="middle" fontFamily="Liberation Sans, sans-serif">
            <text x="632.500" y="683">100 mm</text>
            <text x="-389" y="997" transform="rotate(-90)">100 mm</text>
        </g>
    </svg>
);

const App = () => (
    <div className="flex h-screen flex-col overflow-hidden bg-[#2f2f2f] font-['Inter',sans-serif]">
        <ToolRow className="h-[37px] border-b-2">
            <Tools items="| newDoc open save | undo+ redo- . refresh |" />
            <WorkbenchSelect />
            <Tools items="| record stop macros play" />
        </ToolRow>
        <ToolRow>
            <Tools items="| fitAll fitSelection drawStyle+ boundingBox . back forward linkGo+ . syncView+ isometric . front top right . rear bottom left . measure | whatsThis" />
        </ToolRow>
        <ToolRow>
            <Tools items="| leaveSketch viewSketch viewSection | point line arc+ circle+ conic+ spline+ . polyline rectangle+ polygon+ slot . fillet+ trim extend split external carbonCopy toggleConstruction | coincident pointOnObject vertical horizontal parallel perpendicular tangent equal symmetric block . lock distanceX distanceY distance" />
            <div className="ml-auto flex">
                <Tools items="> | driving > | bspline+ > | virtualSpace" />
            </div>
        </ToolRow>
        <ToolRow className="h-[35px] border-b">
            <Tools items="| grid+ snap+ renderOrder+" />
        </ToolRow>

        <div className="flex min-h-0 flex-1">
            <ComboView />
            <main className="flex min-w-0 flex-1 flex-col">
                <div className="relative flex-1 overflow-hidden bg-linear-to-b from-[#333367] to-[#9797ad]">
                    <Sketch />
                    <NavCube />
                    <AxisCross />
                </div>
                <div className="grid h-[21px] shrink-0 grid-cols-[1fr_auto_1fr] bg-[#323232]">
                    <span className="h-2.5 border-b border-[#4d4d4d] bg-[#3a3a3a]" />
                    <div className="flex h-5 overflow-hidden rounded-[5px] text-[13px] leading-5 text-[#f1f1f1]">
                        <button className="w-[107px] bg-[#656565] pr-1">Start page</button>
                        <button className="flex w-28 items-center gap-1.5 bg-[#0179e6] pl-[7px] text-white">
                            <svg width="10" height="10" viewBox="0 0 10 10" aria-hidden="true">
                                <path d="M1 1l8 8M9 1L1 9" stroke="#fff" strokeWidth="1.200" />
                            </svg>
                            cubebit : 1*
                        </button>
                    </div>
                    <span className="h-2.5 border-b border-[#4d4d4d] bg-[#3a3a3a]" />
                </div>
            </main>
        </div>

        <footer className="flex h-[41px] shrink-0 items-center border-t border-[#5a5a5a] px-0.5 text-[13px] text-[#ececec]">
            <span className="flex-1">Valid, Internal name: Sketch</span>
            <span className="mr-14 text-black">TinkerCAD</span>
            <span className="mr-[34px] text-black">386.32 mm x 231.08 mm</span>
        </footer>
    </div>
);

export default App;
